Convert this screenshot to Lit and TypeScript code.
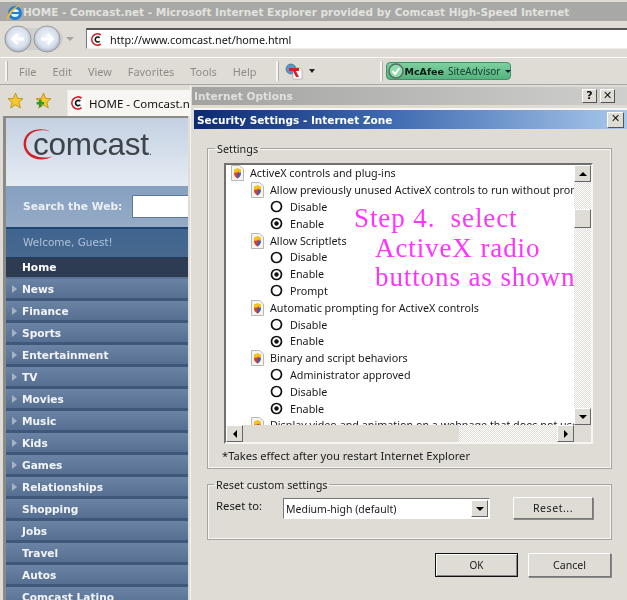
import { LitElement, html, css, svg } from "lit";
import { customElement } from "lit/decorators.js";

const cIcon = (s: number) => html`<svg class="ci" width=${s} height=${s} viewBox="0 0 14 14"><rect width="14" height="14" fill="#fff"/><path d="M10.5 2.2A6 6 0 1 0 10.5 11.8" fill="none" stroke="#d8232a" stroke-width="1.8"/><path d="M9.3 5.2A2.7 2.7 0 1 0 9.3 8.8" fill="none" stroke="#111" stroke-width="1.7"/></svg>`;
const star = svg`<polygon points="8,1 10,6 15,6.3 11.2,9.6 12.5,15 8,12 3.5,15 4.8,9.6 1,6.3 6,6" fill="#f6c92c" stroke="#b98a10" stroke-width=".8"/>`;
const shield = html`<svg class="sh" width="14" height="16" viewBox="0 0 14 16"><path d="M1.5.5H9.5L13.500 4V15.500H1.500Z" fill="#f4f4f0" stroke="#b9b9b4"/><path d="M7.500 3C9 4 10 4.300 11 4.300V8C11 10.500 9.500 12.500 7.500 13.500C5.500 12.500 4 10.500 4 8V4.300C5 4.300 6 4 7.500 3Z" fill="#f6c21c"/><path d="M4 7.500C6 8 7.500 7.500 9 6.200L9.500 10C8.800 11.800 8 13 7.500 13.500C5.500 12.500 4 10.500 4 8Z" fill="#d8402c"/><path d="M7.500 8.200L11 7.500V8C11 10.500 9.500 12.500 7.500 13.500Z" fill="#3c5cc0"/></svg>`;
const radio = (on: boolean) => html`<svg class="ra" width="13" height="13" viewBox="0 0 13 13"><circle cx="6.500" cy="6.500" r="5" fill="#fff" stroke="#111" stroke-width="1.700"/>${on ? svg`<circle cx="6.500" cy="6.500" r="2.200" fill="#111"/>` : ""}</svg>`;

const rows: [number, string][] = [
  [0, "ActiveX controls and plug-ins"],
  [1, "Allow previously unused ActiveX controls to run without prompt"],
  [2, "Disable"], [3, "Enable"],
  [1, "Allow Scriptlets"],
  [2, "Disable"], [3, "Enable"], [2, "Prompt"],
  [1, "Automatic prompting for ActiveX controls"],
  [2, "Disable"], [3, "Enable"],
  [1, "Binary and script behaviors"],
  [2, "Administrator approved"], [2, "Disable"], [3, "Enable"],
  [1, "Display video and animation on a webpage that does not use external media player"],
];
const nav: [string, boolean][] = [
  ["News", true], ["Finance", true], ["Sports", true], ["Entertainment", true], ["TV", true],
  ["Movies", true], ["Music", true], ["Kids", true], ["Games", true], ["Relationships", true],
  ["Shopping", false], ["Jobs", false], ["Travel", false], ["Autos", false], ["Comcast Latino", false],
];
const menu = ["File", "Edit", "View", "Favorites", "Tools", "Help"];

@customElement("app-root")
export class AppRoot extends LitElement {
  static styles = css`
    :host { display: block; width: 627px; height: 600px; overflow: hidden; background: #dfdcd5; font-family: "Noto Sans", sans-serif; font-size: 11px; color: #1a1a1a; }
    svg { display: block; flex: none; }
    .root { filter: blur(0.35px); height: 600px; }
    .title { margin-top: 2px; height: 19px; background: #a8a8a6; display: flex; align-items: center; color: #e2e2de; font: bold 10.500px "DejaVu Sans", sans-serif; padding-left: 5px; white-space: nowrap; }
    .navrow { height: 36px; display: flex; align-items: center; padding: 0 0 0 4px; }
    .arrowdn { width: 0; height: 0; border: 4px solid transparent; border-top: 4px solid #a3a3a0; border-bottom: 0; margin: 0 12px 0 3px; }
    .addr { flex: 1; height: 21px; margin-top: -1px; box-sizing: border-box; background: #fff; border-top: 2px solid #55565a; border-left: 1px solid #77787a; border-bottom: 1px solid #f0efe9; display: flex; align-items: center; padding-left: 4px; gap: 6px; font-size: 10.800px; color: #111; }
    .menu { height: 28px; box-sizing: border-box; border-top: 1px solid #fbfaf7; border-bottom: 1px solid #a8a7a2; display: flex; align-items: center; color: #8c8b86; font-size: 10.900px; padding-left: 5px; }
    .grip { width: 2px; height: 20px; background: #f6f5f1; border-right: 1px solid #b3b2ac; flex: none; }
    .m1 { margin: 0 20px 0 11px; display: flex; gap: 16px; }
    .pdf { margin-left: 6px; }
    .mcafee { margin-left: 3px; width: 125px; height: 18px; border: 1px solid #3f9265; border-radius: 4px; background: linear-gradient(#7fd09f, #54b27f); display: flex; align-items: center; box-sizing: border-box; padding-left: 1px; white-space: nowrap; }
    .mcafee b { font-family: "DejaVu Sans", sans-serif; font-size: 9.500px; color: #0b1a12; }
    .mcafee span { margin-left: 4px; color: #16402b; font-size: 10px; }
    .mcafee i { width: 0; height: 0; border: 3px solid transparent; border-top: 3px solid #123; border-bottom: 0; margin-left: 5px; }
    .pdfarrow { width: 0; height: 0; border: 3px solid transparent; border-top: 4px solid #222; border-bottom: 0; margin: 0 65px 0 6px; flex: none; }
    .lower { display: grid; grid-template-columns: 190px 437px; height: 515px; }
    .tabs { height: 31px; display: flex; align-items: center; padding: 0 0 0 7px; box-sizing: border-box; gap: 11px; overflow: hidden; }
    .tab { margin: 5px 0 0 4px; height: 26px; flex: 1; background: #f7f6f3; border-left: 1px solid #ece9e2; display: flex; align-items: center; gap: 4px; padding-left: 3px; font-size: 11.500px; white-space: nowrap; overflow: hidden; color: #111; }
    .side { margin: 0 2px 0 3px; border-left: 3px solid #8b8a85; border-top: 2px solid #8b8a85; height: 484px; overflow: hidden; background: #5e7698; }
    .logo { height: 68px; background: linear-gradient(#c4d1e2, #e5ebf3); display: flex; align-items: center; padding: 0 0 14px 17px; box-sizing: border-box; color: #3e4349; font: 31.500px "Liberation Sans", sans-serif; letter-spacing: -.2px; }
    .logo span { margin-left: -24px; margin-top: -2px; }
    .logo span::after { content: "."; font-size: 10px; }
    .search { height: 41px; background: linear-gradient(#86a0c1, #95abc6); display: flex; align-items: center; padding-left: 17px; gap: 10px; color: #eaf0f6; font: bold 10.700px "DejaVu Sans", sans-serif; white-space: nowrap; box-sizing: border-box; }
    .search div { flex: 1; height: 21px; background: #fff; border: 1px solid #5f7896; border-right: 0; }
    .welcome { height: 30px; box-sizing: border-box; border-top: 2px solid #1e4571; background: linear-gradient(#3f648f, #47698f); color: #aec1d8; font: 10.500px "DejaVu Sans", sans-serif; display: flex; align-items: center; padding: 0 0 3px 17px; }
    .item { height: 22px; box-sizing: border-box; border-bottom: 3px solid #3f5779; background: linear-gradient(#6b83a4, #566f92); color: #f2f5f9; font: bold 10.600px "DejaVu Sans", sans-serif; display: flex; align-items: center; padding-left: 16px; white-space: nowrap; }
    .item.home { background: #2d3c53; border-top: 1px solid #1d3a5f; border-bottom: 2px solid #5c7496; color: #fff; padding-bottom: 1px; }
    .tri { width: 0; height: 0; border: 4px solid transparent; border-left: 5px solid #a5b3c5; border-right: 0; margin: 0 5px 0 -10px; }
    .dialog { border-left: 1px solid #f4f3ef; padding: 2px 0 0 1px; display: flex; flex-direction: column; }
    .t1 { height: 18px; flex: none; background: linear-gradient(90deg, #a2a2a0, #cfcfcd); color: #e0e0dc; font: bold 10.600px "DejaVu Sans", sans-serif; display: flex; align-items: center; padding: 0 12px 0 2px; justify-content: space-between; }
    .btns { display: flex; gap: 3px; }
    .sb { width: 15px; height: 14px; box-sizing: border-box; background: #dfdcd5; border: 1px solid; border-color: #fff #555 #555 #fff; color: #111; font: bold 11px "DejaVu Sans", sans-serif; line-height: 12px; text-align: center; }
    .t2 { margin: 3px 0 0 2px; height: 22px; flex: none; box-sizing: border-box; border-top: 2px solid #f6f5f2; border-bottom: 1px solid #dfdcd5; background: linear-gradient(90deg, #0c2a72, #3e6ab0 45%, #a8c8ec); color: #fff; font: bold 10.500px "DejaVu Sans", sans-serif; display: flex; align-items: center; padding: 0 3px; justify-content: space-between; }
    .t2 .sb { width: 17px; height: 16px; }
    .content { padding: 10px 15px 0; }
    fieldset { margin: 0; padding: 7px 18px 0 16px; border: 1px solid #a6a49c; box-shadow: 0 0 0 1px #f6f5f1 inset; height: 329px; box-sizing: border-box; min-width: 0; }
    legend { padding: 2px 2px 0; margin-left: -9px; line-height: 14px; font-size: 10.800px; }
    .list { display: grid; grid-template-columns: 1fr 17px; grid-template-rows: 1fr 17px; height: 281px; border: 2px solid; border-color: #707070 #f6f5f1 #f6f5f1 #707070; box-sizing: border-box; }
    .view { background: #fff; overflow: hidden; position: relative; }
    .row { height: 16.800px; display: flex; align-items: center; white-space: nowrap; font-size: 10.750px; color: #1a1a1a; }
    .lv0 { padding-left: 4px; gap: 6px; }
    .lv1 { padding-left: 24px; gap: 6px; }
    .lv2, .lv3 { padding-left: 44px; gap: 7px; }
    .step { position: absolute; left: 128px; top: 39px; color: #ff33ff; font: 27px/29.700px "Liberation Serif", serif; white-space: pre; letter-spacing: .9px; }
    .step div:nth-child(n+2) { padding-left: 21px; }
    .vbar, .hbar { background: repeating-conic-gradient(#fff 0 25%, #dfdcd5 0 50%) 0 0 / 2px 2px; display: flex; }
    .vbar { flex-direction: column; }
    .sbtn { width: 17px; height: 17px; flex: none; box-sizing: border-box; background: #dfdcd5; border: 1px solid; border-color: #fff #666 #666 #fff; display: flex; align-items: center; justify-content: center; }
    .up { width: 0; height: 0; border: 4px solid transparent; border-bottom: 4px solid #000; border-top: 0; }
    .dn { width: 0; height: 0; border: 4px solid transparent; border-top: 4px solid #000; border-bottom: 0; }
    .lf { width: 0; height: 0; border: 4px solid transparent; border-right: 4px solid #000; border-left: 0; }
    .rt { width: 0; height: 0; border: 4px solid transparent; border-left: 4px solid #000; border-right: 0; }
    .vthumb { margin-top: 27px; width: 17px; height: 19px; flex: none; box-sizing: border-box; background: #dfdcd5; border: 1px solid; border-color: #fff #666 #666 #fff; }
    .grow { flex: 1; }
    .hthumb { width: 216px; flex: none; background: #dfdcd5; }
    .corner { background: #dfdcd5; }
    .note { margin: 5px 0 0 -2px; font-size: 11.150px; line-height: 14px; }
    .f2 { margin-top: 7px; height: 64px; padding: 0 18px 0 8px; }
    .f2 legend { margin-left: -2px; }
    .f2row { display: flex; align-items: flex-start; font-size: 11.300px; }
    .f2row > span { width: 67px; line-height: 14px; margin-top: 7px; }
    .sel { margin-top: 6px; width: 207px; height: 21px; box-sizing: border-box; background: #fff; border: 1px solid; border-color: #777 #fff #fff #777; display: flex; align-items: center; justify-content: space-between; padding-left: 2px; font-size: 10.500px; }
    .sel .sbtn { margin-right: 1px; }
    .btn { box-sizing: border-box; background: #dfdcd5; border: 1px solid; border-color: #fff #777 #777 #fff; display: flex; align-items: center; justify-content: center; font-size: 10.600px; box-shadow: 1px 1px 0 #888; }
    .reset { margin: 5px 0 0 23px; width: 80px; height: 22px; letter-spacing: .5px; }
    .foot { display: flex; justify-content: flex-end; gap: 10px; margin-top: 13px; padding-right: 1px; }
    .foot .btn { width: 83px; height: 24px; }
    .foot .ok { border: 1px solid #111; box-shadow: inset 1px 1px 0 #fff, inset -1px -1px 0 #888; font-size: 10px; }
  `;

  render() {
    return html`<div class="root">
      <div class="title">
        <svg width="18" height="18" viewBox="0 0 18 18"><circle cx="10" cy="10" r="5.500" fill="#e8f2fb" stroke="#1f7fd8" stroke-width="3"/><path d="M5 10H15" stroke="#1f7fd8" stroke-width="2"/><path d="M1.500 15.500C3 9 9 3 16.500 1.500C12 3.500 6 9 3 17Z" fill="#f1b62d"/></svg>
        <span>HOME - Comcast.net - Microsoft Internet Explorer provided by Comcast High-Speed Internet</span>
      </div>
      <div class="navrow">
        <svg width="59" height="32" viewBox="0 0 59 32">
          <defs><radialGradient id="g" cx=".5" cy=".45" r=".55"><stop offset="0" stop-color="#f5f8fc"/><stop offset=".7" stop-color="#d6dfec"/><stop offset="1" stop-color="#aab2be"/></radialGradient></defs>
          <rect x="0" y="5" width="59" height="22" rx="11" fill="#cfcfcb"/>
          <circle cx="14" cy="16" r="13" fill="url(#g)" stroke="#9a9a9a"/>
          <circle cx="43" cy="16" r="13" fill="url(#g)" stroke="#9a9a9a"/>
          <path d="M20 16H9M13.500 11L8.500 16L13.500 21" fill="none" stroke="#fff" stroke-width="3"/>
          <path d="M37 16H48M43.500 11L48.500 16L43.500 21" fill="none" stroke="#fff" stroke-width="3"/>
        </svg>
        <div class="arrowdn"></div>
        <div class="addr">${cIcon(13)}<span>http://www.comcast.net/home.html</span></div>
      </div>
      <div class="menu">
        <div class="grip"></div>
        <div class="m1">${menu.map((m) => html`<span>${m}</span>`)}</div>
        <div class="grip"></div>
        <svg class="pdf" width="18" height="17" viewBox="0 0 18 17"><circle cx="6" cy="6" r="5" fill="#4f9ad0" stroke="#37617f" stroke-width=".6"/><path d="M8 5H15L17 7V16H8Z" fill="#fff" stroke="#999" stroke-width=".6"/><path d="M4 5H14V8H11L14 14H11L8 8H4Z" fill="#d6202a"/></svg>
        <div class="pdfarrow"></div>
        <div class="grip"></div>
        <div class="mcafee">
          <svg width="16" height="16" viewBox="0 0 16 16"><circle cx="8" cy="8" r="7" fill="#8fdcae" stroke="#5a6d62" stroke-width="1.500"/><path d="M4.500 8L7 11L11.500 5" fill="none" stroke="#fff" stroke-width="2"/></svg>
          <b>McAfee</b><span>SiteAdvisor</span><i></i>
        </div>
      </div>
      <div class="lower">
        <div>
          <div class="tabs">
            <svg width="17" height="17" viewBox="0 0 16 16">${star}</svg>
            <svg width="17" height="17" viewBox="0 0 16 16">${star}<path d="M5 7V14M1.500 10.500H8.500" stroke="#2f9a2a" stroke-width="2.400"/></svg>
            <div class="tab">${cIcon(14)}<span>HOME - Comcast.net</span></div>
          </div>
          <div class="side">
            <div class="logo">
              <svg width="34" height="34" viewBox="0 0 34 34"><path d="M27 3.500C20 -1 1 0 .5 16C1 30 18 36 30 28C20 32 3 28 3 16C3 3 18 0 27 3.500Z" fill="#d2232a"/></svg>
              <span>comcast</span>
            </div>
            <div class="search"><span>Search the Web:</span><div></div></div>
            <div class="welcome">Welcome, Guest!</div>
            <div class="item home">Home</div>
            ${nav.map(([n, a]) => html`<div class="item">${a ? html`<div class="tri"></div>` : ""}${n}</div>`)}
          </div>
        </div>
        <div class="dialog">
          <div class="t1"><span>Internet Options</span><div class="btns"><div class="sb">?</div><div class="sb">✕</div></div></div>
          <div class="t2"><span>Security Settings - Internet Zone</span><div class="sb">✕</div></div>
          <div class="content">
            <fieldset>
              <legend>Settings</legend>
              <div class="list">
                <div class="view">
                  ${rows.map(([l, t]) => html`<div class="row lv${l}">${l < 2 ? shield : radio(l === 3)}<span>${t}</span></div>`)}
                  <div class="step"><div>Step 4.  select</div><div>ActiveX radio</div><div>buttons as shown</div></div>
                </div>
                <div class="vbar"><div class="sbtn"><div class="up"></div></div><div class="vthumb"></div><div class="grow"></div><div class="sbtn"><div class="dn"></div></div></div>
                <div class="hbar"><div class="sbtn"><div class="lf"></div></div><div class="hthumb"></div><div class="grow"></div><div class="sbtn"><div class="rt"></div></div></div>
                <div class="corner"></div>
              </div>
              <div class="note">*Takes effect after you restart Internet Explorer</div>
            </fieldset>
            <fieldset class="f2">
              <legend>Reset custom settings</legend>
              <div class="f2row"><span>Reset to:</span><div class="sel">Medium-high (default)<div class="sbtn"><div class="dn"></div></div></div><div class="btn reset">Reset...</div></div>
            </fieldset>
            <div class="foot"><div class="btn ok">OK</div><div class="btn">Cancel</div></div>
          </div>
        </div>
      </div>
    </div>`;
  }
}
